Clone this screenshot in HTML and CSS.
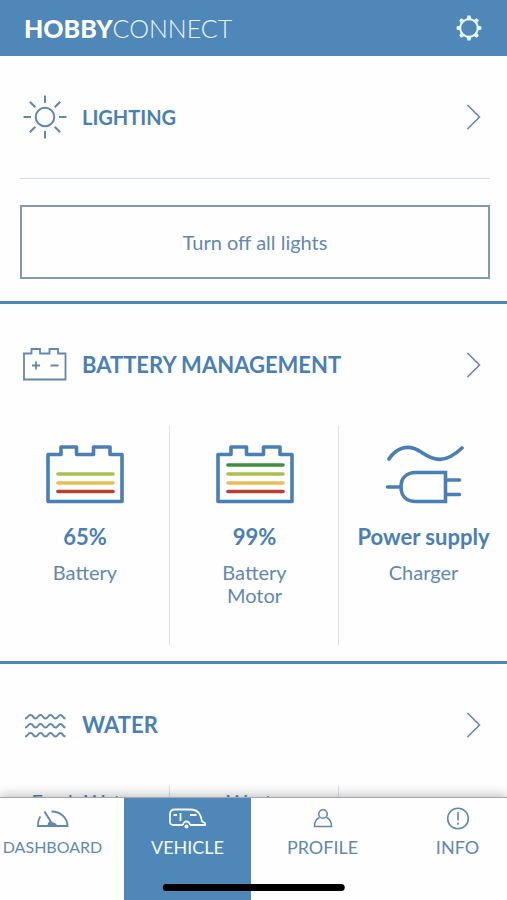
FILE: index.html
```html
<!DOCTYPE html>
<html lang="en">
<head>
<meta charset="utf-8">
<meta name="viewport" content="width=device-width, initial-scale=1">
<title>HobbyConnect</title>
<link rel="stylesheet" href="styles.css">
</head>
<body>
<div class="app">
  <header class="topbar">
    <h1 class="brand"><span class="brand-strong">HOBBY</span>CONNECT</h1>
    <button class="settings" type="button" aria-label="Settings">
      <svg width="26" height="26" viewBox="0 0 26 26" fill="none" stroke="currentColor">
        <circle cx="13" cy="13" r="8.8" stroke-width="2"/>
        <g fill="currentColor" stroke="none">
          <path id="tooth" d="M10.500 4.500 11.500 .6h3l1 3.900z"/>
          <use href="#tooth" transform="rotate(45 13 13)"/>
          <use href="#tooth" transform="rotate(90 13 13)"/>
          <use href="#tooth" transform="rotate(135 13 13)"/>
          <use href="#tooth" transform="rotate(180 13 13)"/>
          <use href="#tooth" transform="rotate(225 13 13)"/>
          <use href="#tooth" transform="rotate(270 13 13)"/>
          <use href="#tooth" transform="rotate(315 13 13)"/>
        </g>
      </svg>
    </button>
  </header>

  <main class="content">
    <section class="panel">
      <a class="panel-link" href="#lighting">
        <svg class="panel-icon" width="44" height="44" viewBox="0 0 44 44" fill="none" stroke="currentColor" stroke-width="2">
          <circle cx="22" cy="22" r="9.3"/>
          <path d="M22 .5v7.500M22 36v7.500M.5 22H8M36 22h7.500M6.800 6.800l5.500 5.500M31.700 31.700l5.500 5.500M37.200 6.800l-5.500 5.500M12.300 31.700l-5.500 5.500"/>
        </svg>
        <h2 class="panel-title panel-title-small">LIGHTING</h2>
        <svg class="chevron" width="16" height="26" viewBox="0 0 16 26" fill="none" stroke="currentColor" stroke-width="1.600"><path d="M1.500 1 13.500 13 1.500 25"/></svg>
      </a>
      <div class="panel-action">
        <button class="outline-button" type="button">Turn off all lights</button>
      </div>
    </section>

    <section class="panel">
      <a class="panel-link" href="#battery">
        <svg class="panel-icon" width="44" height="44" viewBox="0 0 44 44" fill="none" stroke="currentColor" stroke-width="1.800">
          <path d="M1 10.500h7.500V6h8.500v4.500h9.500V6H35v4.500h7.500v26H1z"/>
          <path d="M9 22.500h8M13 18.500v8M27.500 22.500h8"/>
        </svg>
        <h2 class="panel-title">BATTERY MANAGEMENT</h2>
        <svg class="chevron" width="16" height="26" viewBox="0 0 16 26" fill="none" stroke="currentColor" stroke-width="1.600"><path d="M1.500 1 13.500 13 1.500 25"/></svg>
      </a>
      <div class="cells">
        <div class="cell">
          <svg class="cell-icon" width="80" height="60" viewBox="0 0 80 60" fill="none">
            <path d="M3 10.500h13V3h15.500v7.500H48.500V3H65v7.500h12V57.500H3z" stroke="currentColor" stroke-width="3.600" stroke-linejoin="round"/>
            <g stroke-width="3.600" stroke-linecap="round">
              <path d="M13 30h55" stroke="#a9c04f"/><path d="M13 39h55" stroke="#e6be58"/><path d="M13 47.500h55" stroke="#b9402f"/>
            </g>
          </svg>
          <strong class="cell-value">65%</strong>
          <span class="cell-label">Battery</span>
        </div>
        <div class="cell">
          <svg class="cell-icon" width="80" height="60" viewBox="0 0 80 60" fill="none">
            <path d="M3 10.500h13V3h15.500v7.500H48.500V3H65v7.500h12V57.500H3z" stroke="currentColor" stroke-width="3.600" stroke-linejoin="round"/>
            <g stroke-width="3.600" stroke-linecap="round">
              <path d="M13 21h55" stroke="#3f8f3c"/><path d="M13 30h55" stroke="#a9c04f"/><path d="M13 39h55" stroke="#e6be58"/><path d="M13 47.500h55" stroke="#b9402f"/>
            </g>
          </svg>
          <strong class="cell-value">99%</strong>
          <span class="cell-label">Battery Motor</span>
        </div>
        <div class="cell">
          <svg class="cell-icon" width="80" height="60" viewBox="0 0 80 60" fill="none" stroke="currentColor" stroke-width="3.600" stroke-linecap="round">
            <path d="M5 15C12 4 24 -1 37 8S61 20 78 4"/>
            <path d="M3.500 43H17M62 36h13.500M62 50.500h13.500"/>
            <path d="M61.500 28.500H32C21.500 28.500 17 35 17 43S21.500 57.500 32 57.500H61.500z"/>
          </svg>
          <strong class="cell-value">Power supply</strong>
          <span class="cell-label">Charger</span>
        </div>
      </div>
    </section>

    <section class="panel">
      <a class="panel-link" href="#water">
        <svg class="panel-icon" width="44" height="44" viewBox="0 0 44 44" fill="none" stroke="currentColor" stroke-width="2">
          <path id="wave" d="M2 15.500C5 15.500 4.500 12 7.500 12S10 15.500 12.500 15.500 15 12 17.500 12 20 15.500 22.500 15.500 25 12 27.500 12 30 15.500 32.500 15.500 35 12 37.500 12 39.500 15.500 42.500 15.500"/>
          <use href="#wave" y="9"/>
          <use href="#wave" y="18"/>
        </svg>
        <h2 class="panel-title">WATER</h2>
        <svg class="chevron" width="16" height="26" viewBox="0 0 16 26" fill="none" stroke="currentColor" stroke-width="1.600"><path d="M1.500 1 13.500 13 1.500 25"/></svg>
      </a>
      <div class="cells cells-text">
        <div class="cell"><span class="cell-label">Fresh Water</span></div>
        <div class="cell"><span class="cell-label">Waste</span></div>
        <div class="cell"></div>
      </div>
    </section>
  </main>

  <nav class="tabbar">
    <div class="tabs">
      <a class="tab tab-long" href="#dashboard">
        <svg width="40" height="24" viewBox="0 0 40 24" fill="none" stroke="currentColor" stroke-width="1.800">
          <path d="M7.500 9.500C5.500 12 5 14.500 5 19H34.500C34.500 11 27.500 4.500 18.500 4.500"/>
          <path d="M11.500 4.500 18 15" stroke-width="2"/>
          <path d="M14.500 19C14.500 13.500 18.500 13.500 20 15.500L23 16.500 24.500 19z" fill="currentColor" stroke="none"/>
        </svg>
        <span>DASHBOARD</span>
      </a>
      <a class="tab tab-active" href="#vehicle" aria-current="page">
        <svg width="40" height="24" viewBox="0 0 40 24" fill="none" stroke="currentColor" stroke-width="1.800">
          <path d="M15 18H5.500Q2 18 2 14.500V7Q2 2.500 7 2.500H22.500C29.500 2.500 32.500 6 34 14.500L37 16V18H22"/>
          <path d="M15 18a3.500 3.500 0 0 1 7 0"/>
          <circle cx="18.500" cy="19.500" r="2" fill="currentColor" stroke="none"/>
          <path d="M5.500 8h3.500M12.500 6v8M22 8h6.500"/>
        </svg>
        <span>VEHICLE</span>
      </a>
      <a class="tab" href="#profile">
        <svg width="40" height="24" viewBox="0 0 40 24" fill="none" stroke="currentColor" stroke-width="1.600">
          <circle cx="20" cy="7" r="4.300"/>
          <path d="M16.500 10.500C13 12 11.500 15 11.500 19.500H28.500C28.500 15 27 12 23.500 10.500"/>
        </svg>
        <span>PROFILE</span>
      </a>
      <a class="tab" href="#info">
        <svg width="40" height="24" viewBox="0 0 40 24" fill="none" stroke="currentColor" stroke-width="1.600">
          <circle cx="20" cy="11.500" r="10.300"/>
          <path d="M20 5v8.500M20 15.500v2.200"/>
        </svg>
        <span>INFO</span>
      </a>
    </div>
    <div class="home-indicator"></div>
  </nav>
</div>
</body>
</html>
```
FILE: styles.css
```css
:root {
  --blue: #5087b9;
  --ink: #4a7fb5;
  --ink-soft: #6288b0;
  --rule: #d5dbe2;
}

* {
  box-sizing: border-box;
}

body {
  margin: 0;
  background: #fefefe;
  color: var(--ink);
  font-family: Lato, "Liberation Sans", sans-serif;
}

a {
  color: inherit;
  text-decoration: none;
}

button {
  font: inherit;
  color: inherit;
  background: none;
  cursor: pointer;
}

svg {
  display: block;
  flex: none;
}

.app {
  display: flex;
  flex-direction: column;
  height: 100vh;
  overflow: hidden;
}

.topbar {
  display: flex;
  align-items: center;
  justify-content: space-between;
  flex: none;
  height: 56px;
  padding: 0 25px 0 24px;
  background: var(--blue);
  color: #e8f6ff;
}

.brand {
  margin: 0;
  font-size: 25px;
  font-weight: 300;
  line-height: 32px;
}

.brand-strong {
  font-weight: 900;
  color: #fff;
}

.settings {
  padding: 0;
  border: 0;
}

.content {
  flex: 1;
  min-height: 0;
  overflow: hidden;
}

.panel {
  border-bottom: 3px solid var(--blue);
}

.panel-link {
  display: flex;
  align-items: center;
  height: 122px;
  padding: 0 25px 0 23px;
}

.panel-icon {
  margin-right: 15px;
  color: var(--ink-soft);
}

.panel-title {
  flex: 1;
  margin: 0;
  font-size: 22px;
  font-weight: 700;
  line-height: 28px;
}

.panel-title-small {
  font-size: 20px;
}

.chevron {
  color: var(--ink-soft);
}

.panel-action {
  margin: 0 17px 0 20px;
  padding: 26px 0 22px;
  border-top: 1px solid var(--rule);
}

.outline-button {
  width: 100%;
  height: 74px;
  border: 2px solid #8299b2;
  color: var(--ink-soft);
  font-size: 20px;
}

.cells {
  display: grid;
  grid-template-columns: repeat(3, 1fr);
  min-height: 219px;
  margin-bottom: 16px;
}

.cell {
  display: flex;
  flex-direction: column;
  align-items: center;
  padding: 18px 7px 0 8px;
  text-align: center;
}

.cell + .cell {
  border-left: 1px solid #dfe2e6;
}

.cell-value {
  margin-top: 18px;
  font-size: 22px;
  font-weight: 700;
  line-height: 30px;
}

.cell-label {
  max-width: 120px;
  margin-top: 9px;
  color: var(--ink-soft);
  font-size: 20px;
  line-height: 23px;
}

.cell:nth-child(2) .cell-label {
  max-width: 80px;
}

.cells-text .cell {
  padding-top: 0;
}

.cells-text .cell-label {
  margin-top: 4px;
  color: var(--ink);
}

.tabbar {
  position: relative;
  flex: none;
  background: #fefefe;
  border-top: 1px solid #a5a9ae;
  box-shadow: 0 -2px 10px rgba(0, 0, 0, 0.25);
}

.tabs {
  display: grid;
  grid-template-columns: repeat(4, 1fr);
  gap: 8px;
  margin: 0 -14px 0 -11px;
}

.tab {
  display: flex;
  flex-direction: column;
  align-items: center;
  gap: 4px;
  height: 102px;
  padding-top: 9px;
  color: var(--ink-soft);
  font-size: 18px;
  line-height: 24px;
}

.tab-long {
  font-size: 16px;
}

.tab-active {
  background: var(--blue);
  color: #f2faff;
}

.home-indicator {
  position: absolute;
  bottom: 9px;
  left: 50%;
  width: 36%;
  height: 7px;
  border-radius: 4px;
  background: #000;
  transform: translateX(-50%);
}
```
